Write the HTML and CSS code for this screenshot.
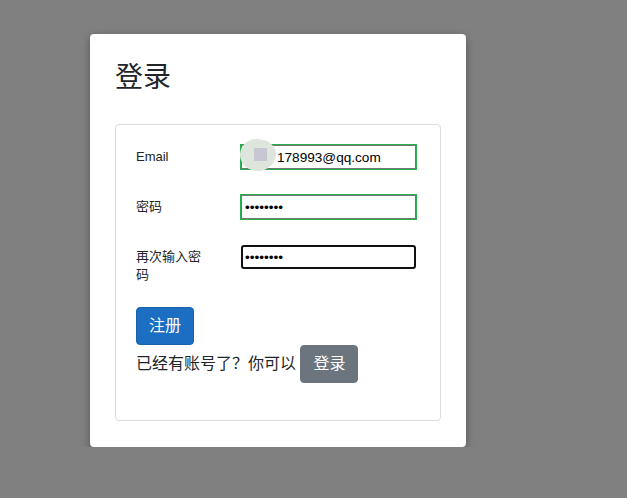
FILE: index.html
```html
<!DOCTYPE html>
<html lang="zh">

<head>
    <meta charset="UTF-8">
    <meta name="viewport" content="width=device-width, initial-scale=1.0">
    <title>登录</title>
    <link rel="stylesheet" href="styles.css">
</head>

<body>
    <div class="modal">
        <h3 class="modal_title">登录</h3>
        <div class="form_box">
            <div class="form_row">
                <label class="form_label">Email</label>
                <div class="input_wrap">
                    <input type="text" class="form_input valid" value="178993@qq.com">
                    <!-- 打码的部分 -->
                    <span class="blur_blob"><span class="blur_square"></span></span>
                </div>
            </div>
            <div class="form_row">
                <label class="form_label">密码</label>
                <div class="input_wrap">
                    <input type="password" class="form_input valid" value="12345678">
                </div>
            </div>
            <div class="form_row">
                <label class="form_label">再次输入密码</label>
                <div class="input_wrap">
                    <input type="password" class="form_input focused" value="12345678">
                </div>
            </div>
            <div class="btn_line">
                <button class="btn btn_primary">注册</button>
            </div>
            <div class="tip_line">已经有账号了？你可以 <button class="btn btn_secondary">登录</button></div>
        </div>
    </div>
</body>

</html>
```

FILE: styles.css
```css
* {
    margin: 0;
    padding: 0;
    box-sizing: border-box;
}

body {
    background-color: #808080;
    font-family: "Liberation Sans", "Noto Sans CJK SC", sans-serif;
    color: #212529;
}

.modal {
    width: 376px;
    margin: 34px 0 0 90px;
    padding: 27px 25px 26px;
    background-color: #fff;
    border-radius: 4px;
    box-shadow: 0 3px 8px rgba(0, 0, 0, .35);
}

.modal_title {
    font-size: 28px;
    font-weight: 400;
    line-height: 34px;
    margin-bottom: 29px;
}

.form_box {
    border: 1px solid #dcdcdc;
    border-radius: 4px;
    padding: 19px 20px 20px;
}

.form_row {
    display: flex;
    align-items: flex-start;
    margin-bottom: 24px;
}

.form_label {
    width: 72px;
    margin-right: 32px;
    padding-top: 4px;
    font-size: 13px;
    line-height: 18px;
}

.input_wrap {
    position: relative;
    padding: 1px;
}

.form_input {
    display: block;
    width: 175px;
    height: 24px;
    padding: 0 3px;
    border: 1px solid #767676;
    font-family: "Liberation Sans", sans-serif;
    font-size: 13.6px;
    color: #000;
    background: #fff;
}

.form_input.valid {
    outline: 1px solid #26b050;
}

.form_input.focused {
    border: 2px solid #101010;
    border-radius: 3px;
    padding: 0 2px;
}

.valid[type="text"] {
    padding-left: 35px;
}

/* 邮箱前面被涂掉的一块 */
.blur_blob {
    position: absolute;
    left: 0;
    top: -5px;
    width: 36px;
    height: 32px;
    border-radius: 45% 55% 50% 50% / 50% 45% 55% 50%;
    background-color: #dde5dd;
}

.blur_square {
    position: absolute;
    left: 14px;
    top: 9px;
    width: 13px;
    height: 13px;
    background-color: #c8c6d2;
}

.btn_line {
    margin-top: -1px;
}

.btn {
    display: inline-block;
    padding: 6px 12px;
    font-family: "Liberation Sans", "Noto Sans CJK SC", sans-serif;
    font-size: 16px;
    line-height: 24px;
    border-radius: 4px;
    color: #fff;
    cursor: pointer;
}

.btn_primary {
    background-color: #1b6ec2;
    border: 1px solid #1861ac;
}

.btn_secondary {
    background-color: #6c757d;
    border: 1px solid #6c757d;
}

.tip_line {
    font-size: 16px;
    margin-top: 0;
    margin-bottom: 17px;
}
```
